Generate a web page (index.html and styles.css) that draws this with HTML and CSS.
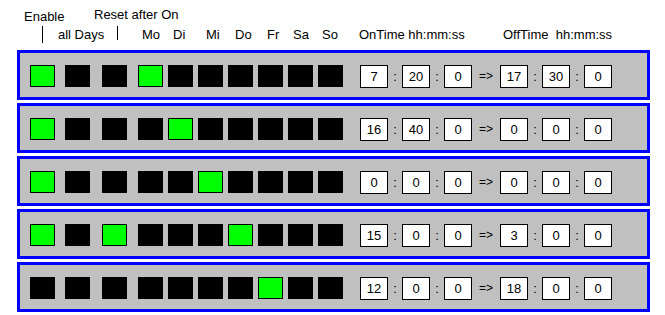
FILE: index.html
```html
<!DOCTYPE html>
<html lang="de">
<head>
    <meta charset="UTF-8">
    <title>Zeitschaltuhr</title>
    <link rel="stylesheet" href="styles.css">
</head>
<body>
    <div class="head1">
        <span class="lbl-enable">Enable</span>
        <span>Reset after On</span>
    </div>
    <div class="head2">
        <span class="bar tall"></span>
        <span>all Days</span>
        <span class="bar"></span>
        <span>Mo</span>
        <span>Di</span>
        <span>Mi</span>
        <span>Do</span>
        <span>Fr</span>
        <span>Sa</span>
        <span>So</span>
        <span>OnTime hh:mm:ss</span>
        <span>OffTime&nbsp; hh:mm:ss</span>
    </div>

    <!-- Zeile 1 -->
    <div class="row">
        <span class="sw on en"></span><span class="sw all"></span><span class="sw rst"></span>
        <div class="days">
            <span class="sw on"></span><span class="sw"></span><span class="sw"></span><span class="sw"></span><span class="sw"></span><span class="sw"></span><span class="sw"></span>
        </div>
        <div class="times">
            <span class="box">7</span><span class="sep">:</span><span class="box">20</span><span class="sep">:</span><span class="box">0</span>
            <span class="arrow">=&gt;</span>
            <span class="box">17</span><span class="sep">:</span><span class="box">30</span><span class="sep">:</span><span class="box">0</span>
        </div>
    </div>

    <!-- Zeile 2 -->
    <div class="row">
        <span class="sw on en"></span><span class="sw all"></span><span class="sw rst"></span>
        <div class="days">
            <span class="sw"></span><span class="sw on"></span><span class="sw"></span><span class="sw"></span><span class="sw"></span><span class="sw"></span><span class="sw"></span>
        </div>
        <div class="times">
            <span class="box">16</span><span class="sep">:</span><span class="box">40</span><span class="sep">:</span><span class="box">0</span>
            <span class="arrow">=&gt;</span>
            <span class="box">0</span><span class="sep">:</span><span class="box">0</span><span class="sep">:</span><span class="box">0</span>
        </div>
    </div>

    <!-- Zeile 3 -->
    <div class="row">
        <span class="sw on en"></span><span class="sw all"></span><span class="sw rst"></span>
        <div class="days">
            <span class="sw"></span><span class="sw"></span><span class="sw on"></span><span class="sw"></span><span class="sw"></span><span class="sw"></span><span class="sw"></span>
        </div>
        <div class="times">
            <span class="box">0</span><span class="sep">:</span><span class="box">0</span><span class="sep">:</span><span class="box">0</span>
            <span class="arrow">=&gt;</span>
            <span class="box">0</span><span class="sep">:</span><span class="box">0</span><span class="sep">:</span><span class="box">0</span>
        </div>
    </div>

    <!-- Zeile 4 -->
    <div class="row">
        <span class="sw on en"></span><span class="sw all"></span><span class="sw on rst"></span>
        <div class="days">
            <span class="sw"></span><span class="sw"></span><span class="sw"></span><span class="sw on"></span><span class="sw"></span><span class="sw"></span><span class="sw"></span>
        </div>
        <div class="times">
            <span class="box">15</span><span class="sep">:</span><span class="box">0</span><span class="sep">:</span><span class="box">0</span>
            <span class="arrow">=&gt;</span>
            <span class="box">3</span><span class="sep">:</span><span class="box">0</span><span class="sep">:</span><span class="box">0</span>
        </div>
    </div>

    <!-- Zeile 5 -->
    <div class="row">
        <span class="sw en"></span><span class="sw all"></span><span class="sw rst"></span>
        <div class="days">
            <span class="sw"></span><span class="sw"></span><span class="sw"></span><span class="sw"></span><span class="sw on"></span><span class="sw"></span><span class="sw"></span>
        </div>
        <div class="times">
            <span class="box">12</span><span class="sep">:</span><span class="box">0</span><span class="sep">:</span><span class="box">0</span>
            <span class="arrow">=&gt;</span>
            <span class="box">18</span><span class="sep">:</span><span class="box">0</span><span class="sep">:</span><span class="box">0</span>
        </div>
    </div>
</body>
</html>
```

FILE: styles.css
```css
body {
    margin: 0;
    background: #fff;
    color: #000;
    font-family: 'Liberation Sans', Arial, sans-serif;
    font-size: 13px;
    line-height: 15px;
}
.head1 {
    display: grid;
    grid-template-columns: 70px auto;
    padding: 7px 0 0 24px;
    height: 20px;
}
.lbl-enable {
    margin-top: 2px;
}
.head2 {
    display: grid;
    grid-template-columns: 16px 59px 25px 31px 33px 29px 32px 26px 29px 37px 144px auto;
    padding-left: 42px;
    height: 15px;
    white-space: nowrap;
}
.bar {
    border-left: 1px solid #000;
    height: 14px;
    margin-top: -1px;
}
.bar.tall {
    height: 17px;
}
.row {
    display: flex;
    align-items: flex-start;
    width: 633px;
    height: 50px;
    box-sizing: border-box;
    margin: 8px 0 0 17px;
    padding: 12px 0 0 10px;
    border: 3px solid #0000ff;
    background: #c0c0c0;
}
.row + .row {
    margin-top: 3px;
}
.sw {
    display: block;
    width: 25px;
    height: 22px;
    box-sizing: border-box;
    background: #000;
}
.sw.on {
    background: #00ff00;
    border: 1px solid #000;
}
.en {
    margin-right: 10px;
}
.all {
    margin-right: 12px;
}
.rst {
    margin-right: 11px;
}
.days {
    display: flex;
    gap: 5px;
}
.times {
    display: flex;
    margin-left: 17px;
}
.box {
    width: 28px;
    height: 23px;
    box-sizing: border-box;
    border: 1px solid #000;
    background: #fff;
    text-align: center;
    line-height: 21px;
}
.sep {
    width: 14px;
    text-align: center;
    line-height: 23px;
}
.arrow {
    width: 28px;
    text-align: center;
    line-height: 23px;
    font-size: 12px;
}
```
